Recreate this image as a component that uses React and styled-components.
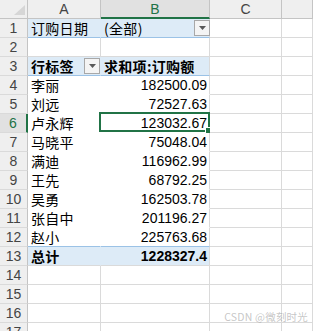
import React from "react";
import styled, { createGlobalStyle, css } from "styled-components";

const Global = createGlobalStyle`
  html, body { margin: 0; padding: 0; background: #fff; overflow: hidden; }
  body { font-family: "Liberation Sans", "Noto Sans CJK SC", sans-serif; }
`;

const GRID = "#dadada";
const HEAD_LINE = "#c4c4c4";
const PIVOT_BG = "#ddebf7";
const PIVOT_LINE = "#9bc2e6";
const GREEN = "#217346";

const Page = styled.div`
  position: relative;
  width: 313px;
  height: 331px;
  overflow: hidden;
`;

const Sheet = styled.div`
  display: grid;
  grid-template-columns: 28px 73px 109px 72px 1fr;
  grid-auto-rows: 19px;
`;

const Corner = styled.div`
  box-sizing: border-box;
  background: #efefef;
  border-right: 1px solid ${HEAD_LINE};
  border-bottom: 1px solid ${HEAD_LINE};
  display: flex;
  align-items: flex-end;
  justify-content: flex-end;
  padding: 0 2px 3px 0;
`;

const ColHeader = styled.div`
  box-sizing: border-box;
  background: ${(p) => (p.$selected ? "#e1e1e1" : "#efefef")};
  color: ${(p) => (p.$selected ? GREEN : "#444")};
  border-right: 1px solid ${HEAD_LINE};
  border-bottom: ${(p) => (p.$selected ? `2px solid ${GREEN}` : `1px solid ${HEAD_LINE}`)};
  font-size: 14px;
  display: flex;
  align-items: center;
  justify-content: center;
  padding-top: ${(p) => (p.$selected ? "1px" : "0")};
`;

const RowHeader = styled.div`
  box-sizing: border-box;
  background: ${(p) => (p.$selected ? "#e1e1e1" : "#efefef")};
  color: ${(p) => (p.$selected ? GREEN : "#444")};
  border-right: ${(p) => (p.$selected ? `2px solid ${GREEN}` : `1px solid ${HEAD_LINE}`)};
  border-bottom: 1px solid ${GRID};
  font-size: 14px;
  display: flex;
  align-items: center;
  justify-content: center;
`;

const Cell = styled.div`
  position: relative;
  box-sizing: border-box;
  border-right: 1px solid ${GRID};
  border-bottom: 1px solid ${GRID};
  background: #fff;
  color: #000;
  font-size: 14px;
  line-height: 18px;
  white-space: nowrap;
  display: flex;
  align-items: center;
  justify-content: ${(p) => (p.$align === "right" ? "flex-end" : "flex-start")};
  padding: ${(p) => (p.$align === "right" ? "0 2px 0 0" : "0 0 0 3px")};
  font-weight: ${(p) => (p.$bold ? 700 : 400)};
  ${(p) =>
    p.$pivot &&
    css`
      border-right-color: ${p.$last ? GRID : "#fff"};
      border-bottom-color: #fff;
    `}
  ${(p) =>
    p.$band &&
    css`
      background: ${PIVOT_BG};
      border-right-color: ${p.$last ? GRID : PIVOT_BG};
      border-bottom-color: ${PIVOT_LINE};
    `}
  ${(p) =>
    p.$aboveTotal &&
    css`
      border-bottom-color: ${PIVOT_LINE};
    `}
  ${(p) =>
    p.$total &&
    css`
      background: ${PIVOT_BG};
      border-right-color: ${p.$last ? GRID : PIVOT_BG};
    `}
`;

const Cjk = styled.span`
  font-family: "Noto Sans CJK SC", sans-serif;
  font-size: 14px;
  letter-spacing: 0.3px;
`;

const Num = styled.span`
  font-family: "Liberation Sans", sans-serif;
  font-size: 14px;
`;

const DropButton = styled.span`
  box-sizing: border-box;
  margin-left: auto;
  margin-right: ${(p) => p.$mr || 0}px;
  width: 16px;
  height: 16px;
  border: 1px solid #a8a8a8;
  background: #f4f4f4;
  display: flex;
  align-items: center;
  justify-content: center;
  flex: none;
`;

const Selection = styled.div`
  position: absolute;
  left: -2px;
  top: -2px;
  right: -1px;
  bottom: 0;
  border: 2px solid ${GREEN};
  pointer-events: none;
`;

const FillHandle = styled.div`
  position: absolute;
  right: -3px;
  bottom: -3px;
  width: 5px;
  height: 5px;
  background: ${GREEN};
  border-left: 1px solid #fff;
  border-top: 1px solid #fff;
`;

const Watermark = styled.div`
  position: absolute;
  right: 5px;
  bottom: 7px;
  font-family: "Noto Sans CJK SC", sans-serif;
  font-size: 10.5px;
  color: rgba(150, 150, 150, 0.55);
  letter-spacing: 0.2px;
`;

const Tri = () => (
  <svg width="7" height="4" viewBox="0 0 7 4">
    <path d="M0 0 H7 L3.5 4 Z" fill="#595959" />
  </svg>
);

const data = [
  ["李丽", "182500.09"],
  ["刘远", "72527.63"],
  ["卢永辉", "123032.67"],
  ["马晓平", "75048.04"],
  ["满迪", "116962.99"],
  ["王先", "68792.25"],
  ["吴勇", "162503.78"],
  ["张自中", "201196.27"],
  ["赵小", "225763.68"],
];

export default function App() {
  const rows = [];
  // row 1
  rows.push(
    <React.Fragment key="r1">
      <RowHeader>1</RowHeader>
      <Cell $band>
        <Cjk>订购日期</Cjk>
      </Cell>
      <Cell $band $last>
        <Cjk>(全部)</Cjk>
        <DropButton $mr={-1}>
          <Tri />
        </DropButton>
      </Cell>
      <Cell />
      <Cell />
    </React.Fragment>
  );
  // row 2
  rows.push(
    <React.Fragment key="r2">
      <RowHeader>2</RowHeader>
      <Cell />
      <Cell />
      <Cell />
      <Cell />
    </React.Fragment>
  );
  // row 3
  rows.push(
    <React.Fragment key="r3">
      <RowHeader>3</RowHeader>
      <Cell $band $bold>
        <Cjk>行标签</Cjk>
        <DropButton $mr={0}>
          <Tri />
        </DropButton>
      </Cell>
      <Cell $band $last $bold>
        <Cjk>求和项:订购额</Cjk>
      </Cell>
      <Cell />
      <Cell />
    </React.Fragment>
  );
  data.forEach(([name, val], i) => {
    const n = i + 4;
    const sel = n === 6;
    const above = i === data.length - 1;
    rows.push(
      <React.Fragment key={"d" + n}>
        <RowHeader $selected={sel}>{n}</RowHeader>
        <Cell $pivot $aboveTotal={above}>
          <Cjk>{name}</Cjk>
        </Cell>
        <Cell $pivot $last $aboveTotal={above} $align="right">
          <Num>{val}</Num>
          {sel && (
            <Selection>
              <FillHandle />
            </Selection>
          )}
        </Cell>
        <Cell />
        <Cell />
      </React.Fragment>
    );
  });
  rows.push(
    <React.Fragment key="r13">
      <RowHeader>13</RowHeader>
      <Cell $total $bold>
        <Cjk>总计</Cjk>
      </Cell>
      <Cell $total $last $bold $align="right">
        <Num>1228327.4</Num>
      </Cell>
      <Cell />
      <Cell />
    </React.Fragment>
  );
  for (let n = 14; n <= 17; n++) {
    rows.push(
      <React.Fragment key={"e" + n}>
        <RowHeader>{n}</RowHeader>
        <Cell />
        <Cell />
        <Cell />
        <Cell />
      </React.Fragment>
    );
  }

  return (
    <Page>
      <Global />
      <Sheet>
        <Corner>
          <svg width="11" height="10" viewBox="0 0 11 10">
            <path d="M11 0 V10 H0 Z" fill="#d6d6d6" />
          </svg>
        </Corner>
        <ColHeader>A</ColHeader>
        <ColHeader $selected>B</ColHeader>
        <ColHeader>C</ColHeader>
        <ColHeader />
        {rows}
      </Sheet>
      <Watermark>CSDN @微刻时光</Watermark>
    </Page>
  );
}
